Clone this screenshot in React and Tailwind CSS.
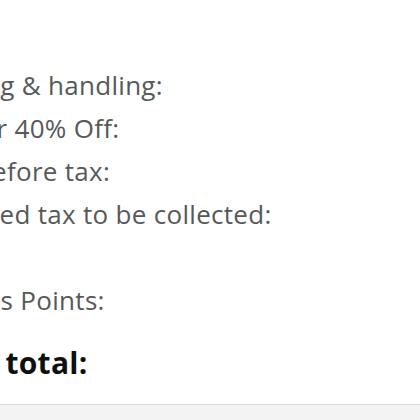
import React from "react";

const rows = [
  "Shipping & handling:",
  "Save for 40% Off:",
  "Total before tax:",
  "Estimated tax to be collected:",
  "",
  "Rewards Points:",
];

export default function App() {
  return (
    <div className="w-[420px] h-[420px] bg-white overflow-hidden flex flex-col" style={{ fontFamily: '"Open Sans", "Noto Sans", sans-serif' }}>
      <div className="flex-1 pt-[64px] -ml-[93px]">
        {rows.map((r, i) => (
          <div key={i} className="h-[43px] leading-[43px] text-[26px] tracking-[0.3px] text-[#565959] whitespace-nowrap">
            {r}
          </div>
        ))}
        <div className="mt-[19px] ml-[1px] text-[30px] leading-[43px] tracking-[0.3px] font-bold text-[#0f1111] whitespace-nowrap">
          Order total:
        </div>
      </div>
      <div className="h-[16px] border-t border-[#d5d9d9] bg-[#f3f3f3]" />
    </div>
  );
}
